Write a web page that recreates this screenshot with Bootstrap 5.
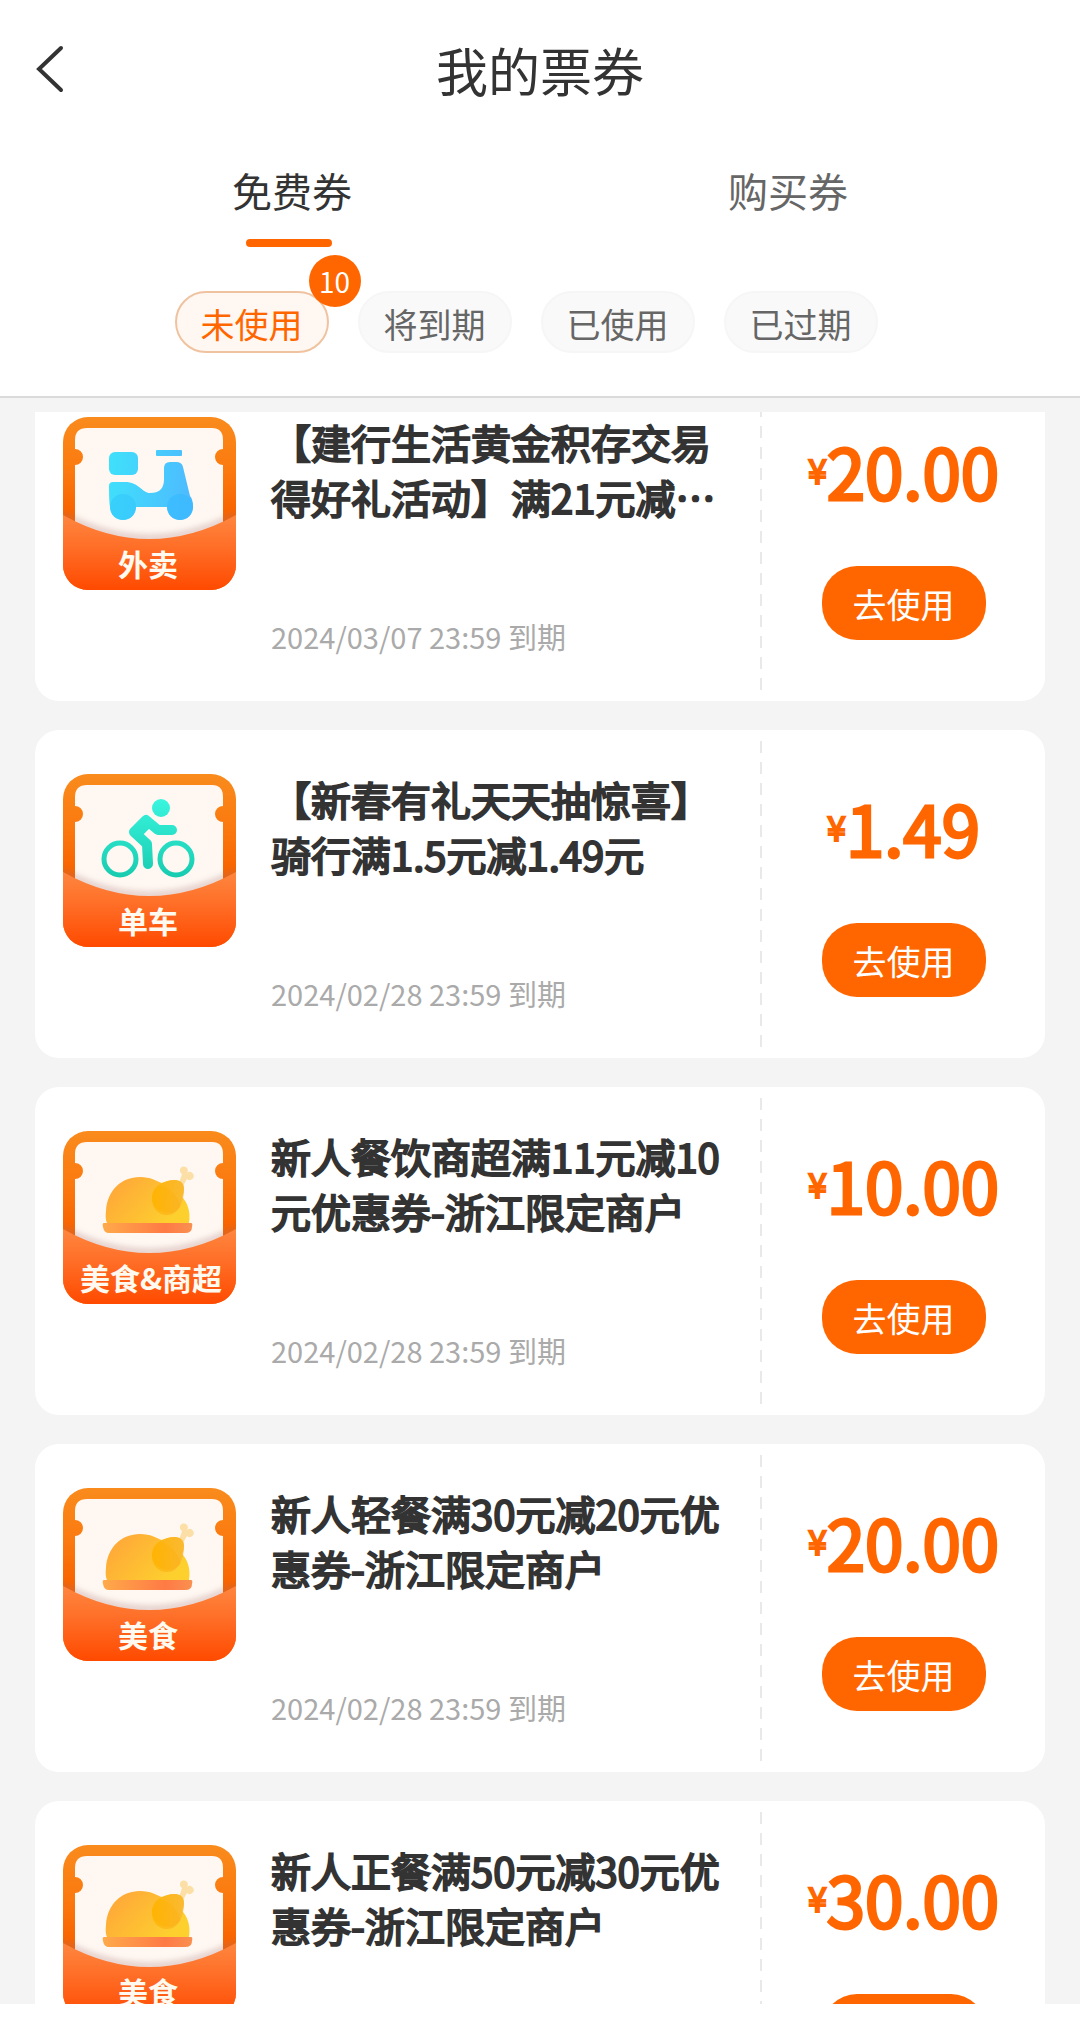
<!DOCTYPE html>
<html lang="zh-CN">
<head>
<meta charset="utf-8">
<meta name="viewport" content="width=device-width, initial-scale=1">
<title>我的票券</title>
<link href="https://cdn.jsdelivr.net/npm/bootstrap@5.3.0/dist/css/bootstrap.min.css" rel="stylesheet">
<style>
  :root { --brand: #ff6600; }
  body { font-family: "Noto Sans CJK SC", sans-serif; color: #333; background: #fff; }
  .app-shell { height: 100vh; padding-bottom: 30px; }

  .top-bar { padding: 40px 32px 0; }
  .top-bar h1 { font-size: 52px; line-height: 60px; font-weight: 400; }
  .back-btn { width: 36px; height: 60px; color: #333; }

  .kind-tabs { padding: 66px 44px 0; }
  .kind-tabs button { font-size: 40px; line-height: 48px; color: #666; border: 0; background: none; padding: 0; }
  .kind-tabs button.active { color: #333; }
  .kind-tabs button::after { content: ""; display: block; width: 86px; height: 8px; border-radius: 4px; margin: 25px auto 0; }
  .kind-tabs button.active::after { background: var(--brand); margin-left: 202px; }

  .state-pills { gap: 29px; padding: 44px 28px 43px 0; border-bottom: 2px solid #dadada; }
  .state-pill { width: 154px; height: 62px; font-size: 34px; line-height: 58px; padding: 2px 0 0; color: #666;
    background: #f9f9f9; border: 2px solid #f6f6f6; border-radius: 31px; }
  .state-pill.active { color: var(--brand); background: #fff7f1; border-color: #f0c3a0; }
  .count-dot { width: 52px; height: 52px; top: -38px; right: -34px; border-radius: 50%;
    background: var(--brand); color: #fff; font-size: 28px; line-height: 52px; }

  .list-area { background: #f4f4f4; padding: 14px 35px 0; min-height: 0; }
  .scroller { overflow: hidden; }
  .coupon-list { gap: 29px; margin-top: -39px; }
  .coupon { height: 328px; background: #fff; border-radius: 24px; flex: none; }
  .coupon-main { padding: 44px 0 0 28px; gap: 35px; min-width: 0; }
  .coupon-icon { width: 173px; height: 173px; flex: none; }
  .coupon-icon text { font-size: 30px; font-weight: 700; fill: #fffaf0; text-anchor: middle; }
  .coupon-text { margin-top: -2px; }
  .coupon-name { width: 460px; font-size: 40px; line-height: 55px; font-weight: 400; -webkit-text-stroke: 2px #333; margin: 0; }
  .coupon-date { font-size: 29px; line-height: 40px; color: #aaa; margin: 91px 0 0; }
  .coupon-side { width: 285px; padding: 57px 0 0 2px; flex: none;
    background: repeating-linear-gradient(#e9e9e9 0 12px, transparent 12px 21px) 0 11px / 2px 306px no-repeat; }
  .price { color: var(--brand); -webkit-text-stroke: 3px var(--brand); font-size: 69px; line-height: 80px; }
  .price .yen { font-size: 34px; -webkit-text-stroke-width: 2px; }
  .use-btn { width: 164px; height: 74px; margin-top: 56px; border: 0; border-radius: 35px; padding: 2px 0 0;
    background: var(--brand); color: #fff; font-size: 34px; line-height: 72px; }
</style>
</head>
<body>
<svg width="0" height="0" class="position-absolute" aria-hidden="true">
  <defs>
    <linearGradient id="gFrame" x1="0" y1="0" x2="0" y2="1"><stop offset="0" stop-color="#f98b1c"/><stop offset=".3" stop-color="#fb7a10"/><stop offset=".55" stop-color="#f86400"/></linearGradient>
    <linearGradient id="gPocket" x1="0" y1="0" x2="0" y2="1"><stop offset="0" stop-color="#ff863f"/><stop offset=".4" stop-color="#ff7029"/><stop offset="1" stop-color="#ff4a00"/></linearGradient>
    <linearGradient id="gBody" x1="0" y1="0" x2="1" y2=".5"><stop offset="0" stop-color="#ffa23a"/><stop offset="1" stop-color="#fdd02e"/></linearGradient>
    <linearGradient id="gDrum" x1="0" y1="0" x2="1" y2="0"><stop offset="0" stop-color="#ffb400"/><stop offset="1" stop-color="#f9b431"/></linearGradient>
    <linearGradient id="gPlate" x1="0" y1="0" x2="1" y2="0"><stop offset="0" stop-color="#ffaa4a"/><stop offset=".7" stop-color="#ff7a45"/><stop offset="1" stop-color="#f99050"/></linearGradient>
    <linearGradient id="gBlue" gradientUnits="userSpaceOnUse" x1="45" y1="60" x2="130" y2="70"><stop offset="0" stop-color="#3fe0fb"/><stop offset="1" stop-color="#4ebaff"/></linearGradient>
    <linearGradient id="gTeal" gradientUnits="userSpaceOnUse" x1="0" y1="25" x2="0" y2="102"><stop offset="0" stop-color="#3af5df"/><stop offset="1" stop-color="#18ccb0"/></linearGradient>
    <filter id="fSoft" x="-10%" y="-30%" width="120%" height="160%"><feGaussianBlur stdDeviation="3"/></filter>
    <clipPath id="cFrame"><rect width="173" height="173" rx="25"/></clipPath>
    <symbol id="ticket" viewBox="0 0 173 173">
      <g clip-path="url(#cFrame)">
        <rect width="173" height="173" fill="url(#gFrame)"/>
        <path d="M24 11H149Q160 11 160 23V32A8 8 0 0 0 160 48V125H12V48A8 8 0 0 0 12 32V23Q12 11 24 11Z" fill="#fff8f2"/>
        <path d="M0 98Q86 144 173 98" fill="none" stroke="#a06a70" stroke-opacity=".35" stroke-width="6" filter="url(#fSoft)"/>
        <path d="M0 98Q86 146 173 98V173H0Z" fill="url(#gPocket)"/>
      </g>
    </symbol>
    <symbol id="chicken" viewBox="0 0 173 173">
      <path d="M116 52L119 43A4 4 0 1 1 124 42A4 4 0 1 1 124 48L120 55Z" fill="#fbdfa6"/>
      <path d="M44 92Q42 88 43 80C44 60 58 46 77 46C88 46 93 50 99 52C106 48 121 46 121 58Q121 62 119 66C124 71 128 80 126 92Z" fill="url(#gBody)"/>
      <path d="M89 68A16 16 0 0 1 97 54Q107 56 113 65Q118 72 117 76A16 16 0 0 1 89 68Z" fill="#ffb200" fill-opacity=".8"/>
      <path d="M99 52C107 48 121 46 121 58C121 70 116 84 104 84C95 84 89 77 89 68C89 60 93 54 99 52Z" fill="url(#gDrum)" fill-opacity=".75"/>
      <path d="M41 92H128Q130 92 129 96Q129 102 122 102H46Q41 102 40 96Q39 92 41 92Z" fill="url(#gPlate)"/>
    </symbol>
    <symbol id="scooter" viewBox="0 0 173 173">
      <g fill="url(#gBlue)">
        <rect x="46" y="35" width="29" height="23" rx="6"/>
        <rect x="93" y="33" width="26" height="6" rx="1"/>
        <path d="M46 69Q46 65 50 65H62C76 65 79 76 87 76C98 76 101 70 101 62V51Q101 45 107 45H113Q119 45 120 50L127 79Q130 82 130 90H47Q46 85 46 69Z"/>
        <circle cx="60" cy="90" r="13"/>
        <circle cx="117" cy="90" r="13"/>
      </g>
      <circle cx="60" cy="90" r="13" fill="#30c4fb" fill-opacity=".5"/>
      <circle cx="117" cy="90" r="13" fill="#2fb8ff" fill-opacity=".5"/>
    </symbol>
    <symbol id="cyclist" viewBox="0 0 173 173">
      <circle cx="98" cy="34" r="9" fill="url(#gTeal)"/>
      <g fill="none" stroke="url(#gTeal)">
        <circle cx="57" cy="85" r="16" stroke-width="5"/>
        <circle cx="113" cy="85" r="16" stroke-width="5"/>
        <path d="M109 56H95L83 46L71 58L84 70L85 90" stroke-width="10" stroke-linecap="round" stroke-linejoin="round"/>
        <path d="M84 49L77 56" stroke-width="11" stroke-linecap="round"/>
      </g>
    </symbol>
  </defs>
</svg>

<div class="app-shell d-flex flex-column overflow-hidden">
  <header>
    <div class="top-bar d-flex align-items-center justify-content-between">
      <button type="button" class="back-btn btn p-0 border-0 d-flex align-items-center" aria-label="返回">
        <svg width="36" height="60" viewBox="0 0 36 60" fill="none" stroke="currentColor" stroke-width="4" stroke-linecap="round"><path d="M29 8L7 29L29 50"/></svg>
      </button>
      <h1 class="m-0">我的票券</h1>
      <span class="back-btn"></span>
    </div>
    <nav class="kind-tabs d-flex" aria-label="票券类型">
      <button type="button" class="active flex-fill w-50">免费券</button>
      <button type="button" class="flex-fill w-50">购买券</button>
    </nav>
    <div class="state-pills d-flex justify-content-center">
      <button type="button" class="state-pill active position-relative">未使用<span class="count-dot position-absolute text-center">10</span></button>
      <button type="button" class="state-pill">将到期</button>
      <button type="button" class="state-pill">已使用</button>
      <button type="button" class="state-pill">已过期</button>
    </div>
  </header>

  <main class="list-area flex-grow-1 d-flex flex-column">
    <div class="scroller flex-grow-1">
      <div class="coupon-list d-flex flex-column">

        <article class="coupon d-flex">
          <div class="coupon-main d-flex flex-grow-1">
            <svg class="coupon-icon" viewBox="0 0 173 173"><use href="#ticket"/><use href="#scooter"/><text x="85" y="159">外卖</text></svg>
            <div class="coupon-text">
              <h2 class="coupon-name">【建行生活黄金积存交易得好礼活动】满21元减…</h2>
              <p class="coupon-date">2024/03/07 23:59 到期</p>
            </div>
          </div>
          <div class="coupon-side d-flex flex-column align-items-center">
            <div class="price d-flex align-items-center"><span class="yen">¥</span><span>20.00</span></div>
            <button type="button" class="use-btn">去使用</button>
          </div>
        </article>

        <article class="coupon d-flex">
          <div class="coupon-main d-flex flex-grow-1">
            <svg class="coupon-icon" viewBox="0 0 173 173"><use href="#ticket"/><use href="#cyclist"/><text x="85" y="159">单车</text></svg>
            <div class="coupon-text">
              <h2 class="coupon-name">【新春有礼天天抽惊喜】骑行满1.5元减1.49元</h2>
              <p class="coupon-date">2024/02/28 23:59 到期</p>
            </div>
          </div>
          <div class="coupon-side d-flex flex-column align-items-center">
            <div class="price d-flex align-items-center"><span class="yen">¥</span><span>1.49</span></div>
            <button type="button" class="use-btn">去使用</button>
          </div>
        </article>

        <article class="coupon d-flex">
          <div class="coupon-main d-flex flex-grow-1">
            <svg class="coupon-icon" viewBox="0 0 173 173"><use href="#ticket"/><use href="#chicken"/><text x="88" y="159">美食&amp;商超</text></svg>
            <div class="coupon-text">
              <h2 class="coupon-name">新人餐饮商超满11元减10元优惠券-浙江限定商户</h2>
              <p class="coupon-date">2024/02/28 23:59 到期</p>
            </div>
          </div>
          <div class="coupon-side d-flex flex-column align-items-center">
            <div class="price d-flex align-items-center"><span class="yen">¥</span><span>10.00</span></div>
            <button type="button" class="use-btn">去使用</button>
          </div>
        </article>

        <article class="coupon d-flex">
          <div class="coupon-main d-flex flex-grow-1">
            <svg class="coupon-icon" viewBox="0 0 173 173"><use href="#ticket"/><use href="#chicken"/><text x="85" y="159">美食</text></svg>
            <div class="coupon-text">
              <h2 class="coupon-name">新人轻餐满30元减20元优惠券-浙江限定商户</h2>
              <p class="coupon-date">2024/02/28 23:59 到期</p>
            </div>
          </div>
          <div class="coupon-side d-flex flex-column align-items-center">
            <div class="price d-flex align-items-center"><span class="yen">¥</span><span>20.00</span></div>
            <button type="button" class="use-btn">去使用</button>
          </div>
        </article>

        <article class="coupon d-flex">
          <div class="coupon-main d-flex flex-grow-1">
            <svg class="coupon-icon" viewBox="0 0 173 173"><use href="#ticket"/><use href="#chicken"/><text x="85" y="159">美食</text></svg>
            <div class="coupon-text">
              <h2 class="coupon-name">新人正餐满50元减30元优惠券-浙江限定商户</h2>
            </div>
          </div>
          <div class="coupon-side d-flex flex-column align-items-center">
            <div class="price d-flex align-items-center"><span class="yen">¥</span><span>30.00</span></div>
            <button type="button" class="use-btn" aria-label="去使用"></button>
          </div>
        </article>

      </div>
    </div>
  </main>
</div>
<script src="https://cdn.jsdelivr.net/npm/bootstrap@5.3.0/dist/js/bootstrap.bundle.min.js"></script>
</body>
</html>
